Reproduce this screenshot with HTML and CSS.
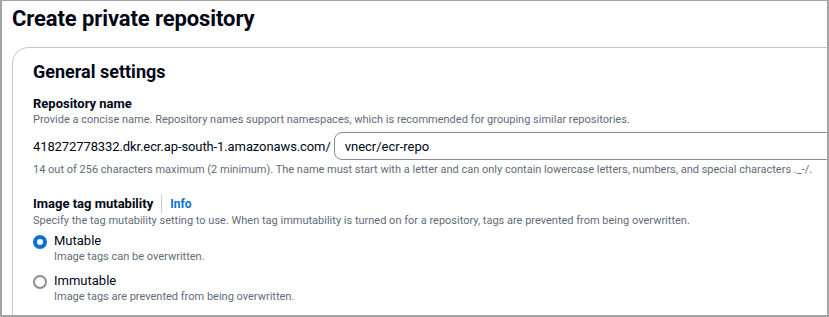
FILE: index.html
```html
<!DOCTYPE html>
<html lang="en">
<head>
  <meta charset="UTF-8">
  <title>Create private repository</title>
  <link rel="stylesheet" href="styles.css">
</head>
<body>
  <div class="frame">
    <h1 class="page-title">Create private repository</h1>

    <div class="container">
      <h2 class="container-title">General settings</h2>

      <div class="field">
        <label class="field-label" for="repoName">Repository name</label>
        <p class="field-desc">Provide a concise name. Repository names support namespaces, which is recommended for grouping similar repositories.</p>
        <div class="repo-input">
          <span class="repo-prefix">418272778332.dkr.ecr.ap-south-1.amazonaws.com/</span>
          <input class="text-input" type="text" id="repoName" value="vnecr/ecr-repo">
        </div>
        <p class="field-hint">14 out of 256 characters maximum (2 minimum). The name must start with a letter and can only contain lowercase letters, numbers, and special characters ._-/.</p>
      </div>

      <div class="field">
        <div class="label-row">
          <span class="field-label">Image tag mutability</span>
          <a class="info-link" href="#">Info</a>
        </div>
        <p class="field-desc">Specify the tag mutability setting to use. When tag immutability is turned on for a repository, tags are prevented from being overwritten.</p>

        <div class="radio-group">
          <label class="radio">
            <span class="radio-dot checked"></span>
            <span class="radio-text">
              <span class="radio-label">Mutable</span>
              <span class="radio-desc">Image tags can be overwritten.</span>
            </span>
          </label>
          <label class="radio">
            <span class="radio-dot"></span>
            <span class="radio-text">
              <span class="radio-label">Immutable</span>
              <span class="radio-desc">Image tags are prevented from being overwritten.</span>
            </span>
          </label>
        </div>
      </div>
    </div>
  </div>
</body>
</html>
```

FILE: styles.css
```css
* {
  box-sizing: border-box;
}

body {
  margin: 0;
  background: #ffffff;
  font-family: Roboto, "Open Sans", sans-serif;
  color: #000716;
}

.frame {
  height: 317px;
  border: 2px solid #a4a4a4;
  border-top-width: 1px;
  overflow: hidden;
  padding: 0 0 0 10px;
}

.page-title {
  margin: 0;
  padding-top: 4px;
  font-size: 22px;
  line-height: 28px;
  font-weight: 700;
  letter-spacing: -0.1px;
}

.container {
  margin-top: 14px;
  margin-right: -40px;
  border: 1px solid #c6c6cd;
  border-radius: 16px;
  padding: 13px 20px 20px;
  min-height: 300px;
}

.container-title {
  margin: 0 0 13px;
  font-size: 18px;
  line-height: 22px;
  font-weight: 700;
}

.field {
  margin-bottom: 17px;
}

.field-label {
  display: block;
  font-size: 13px;
  line-height: 16px;
  font-weight: 700;
}

.field-desc,
.field-hint {
  margin: 0;
  font-size: 11px;
  line-height: 16px;
  color: #5f6b7a;
}

.repo-input {
  display: flex;
  align-items: center;
  gap: 3px;
  margin: 4px 0 2px;
}

.repo-prefix {
  font-size: 13px;
  letter-spacing: -0.1px;
  white-space: nowrap;
}

.text-input {
  flex: 1;
  height: 28px;
  padding: 0 10px;
  border: 1px solid #8c8c94;
  border-radius: 8px;
  font: 13px Roboto, "Open Sans", sans-serif;
  color: #000716;
}

.label-row {
  display: flex;
  align-items: center;
  height: 18px;
}

.label-row .field-label {
  padding-right: 8px;
  border-right: 1px solid #c6c6cd;
  line-height: 18px;
}

.info-link {
  padding-left: 8px;
  font-size: 12px;
  font-weight: 700;
  color: #0972d3;
  text-decoration: none;
}

.radio-group {
  margin-top: 4px;
}

.radio {
  display: flex;
  gap: 7px;
  margin-bottom: 8px;
}

.radio-dot {
  flex: none;
  width: 14px;
  height: 14px;
  margin-top: 2px;
  border: 2px solid #8c8c94;
  border-radius: 50%;
}

.radio-dot.checked {
  border: 4px solid #0972d3;
}

.radio-text {
  display: flex;
  flex-direction: column;
}

.radio-label {
  font-size: 13px;
  line-height: 16px;
}

.radio-desc {
  font-size: 11px;
  line-height: 16px;
  color: #5f6b7a;
}
```
